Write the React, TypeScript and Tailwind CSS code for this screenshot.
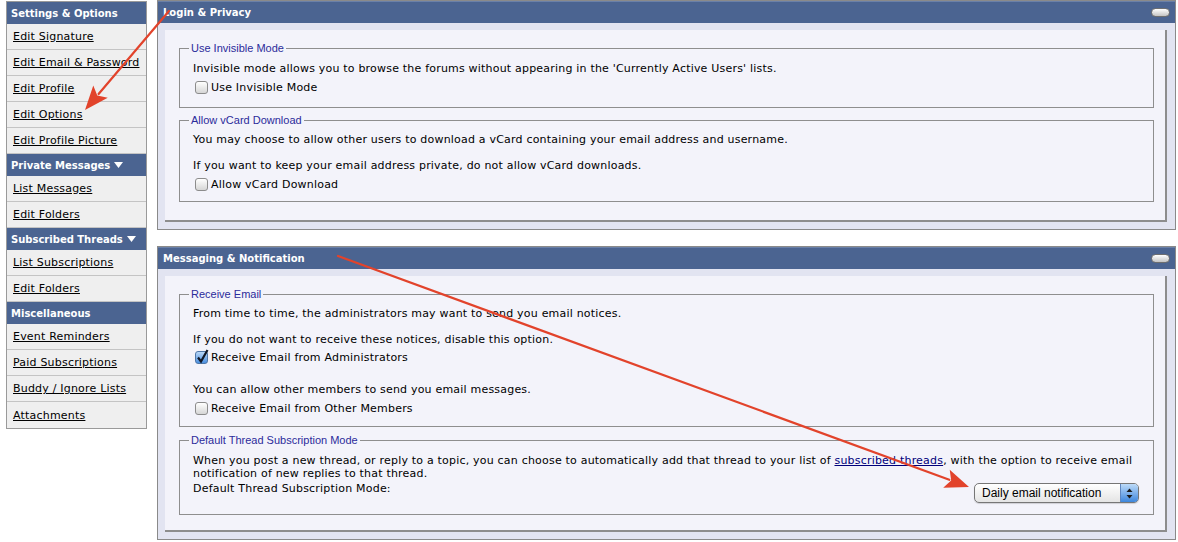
import * as React from "react";

const body = "font-['DejaVu_Sans',Verdana,sans-serif] text-[11px] leading-[13px] tracking-[0.2px] text-black";
const legendFont = "font-['Liberation_Sans',Arial,sans-serif] text-[11px] leading-[13px] text-[#2b2b9b]";
const headFont = "font-['DejaVu_Sans',Verdana,sans-serif] text-[10px] font-bold text-white";

type NavItem = { label: string; header?: boolean; caret?: boolean };

const nav: NavItem[] = [
  { label: "Settings & Options", header: true },
  { label: "Edit Signature" },
  { label: "Edit Email & Password" },
  { label: "Edit Profile" },
  { label: "Edit Options" },
  { label: "Edit Profile Picture" },
  { label: "Private Messages", header: true, caret: true },
  { label: "List Messages" },
  { label: "Edit Folders" },
  { label: "Subscribed Threads", header: true, caret: true },
  { label: "List Subscriptions" },
  { label: "Edit Folders" },
  { label: "Miscellaneous", header: true },
  { label: "Event Reminders" },
  { label: "Paid Subscriptions" },
  { label: "Buddy / Ignore Lists" },
  { label: "Attachments" },
];

function Sidebar() {
  return (
    <div className="mt-px ml-[6px] flex h-fit w-[141px] flex-col border border-[#9a9a9a] bg-[#efefef]">
      {nav.map((item, i) =>
        item.header ? (
          <div key={i} className={`flex h-[22px] items-center gap-[4px] bg-[#4b6491] pl-[4px] ${headFont}`}>
            {item.label}
            {item.caret && (
              <svg width="9" height="6" viewBox="0 0 9 6">
                <path d="M0 0 H9 L4.5 6 Z" fill="#fff" />
              </svg>
            )}
          </div>
        ) : (
          <div key={i} className="flex h-[26px] items-center border-b border-[#c4c4c4] pl-[6px] last:border-b-0">
            <a className={`${body} text-[#00007a] underline`}>{item.label}</a>
          </div>
        )
      )}
    </div>
  );
}

function Checkbox({ checked = false }: { checked?: boolean }) {
  return checked ? (
    <span className="relative inline-block h-[13px] w-[13px] shrink-0 rounded-[3px] border border-[#4f77a8] bg-linear-to-b from-[#b9d8f8] to-[#4a8fdf]">
      <svg className="absolute -top-[3px] left-[0px]" width="13" height="15" viewBox="0 0 13 15">
        <path d="M2 8.5 L5 12.5 L11.5 1" fill="none" stroke="#111827" strokeWidth="2.2" />
      </svg>
    </span>
  ) : (
    <span className="inline-block h-[13px] w-[13px] shrink-0 rounded-[3px] border border-[#8c8c8c] bg-linear-to-b from-white to-[#d6d6d6]" />
  );
}

function CheckRow({ label, checked, className = "" }: { label: string; checked?: boolean; className?: string }) {
  return (
    <div className={`flex h-[16px] items-center gap-[3px] pl-[2px] ${className}`}>
      <Checkbox checked={checked} />
      <span className={body}>{label}</span>
    </div>
  );
}

function Fieldset({ legend, className = "", children }: { legend: string; className?: string; children: React.ReactNode }) {
  return (
    <fieldset className={`border border-[#8e8e8e] pr-[12px] pl-[13px] ${className}`}>
      <legend className={`-ml-[4px] px-[2px] ${legendFont}`}>{legend}</legend>
      {children}
    </fieldset>
  );
}

function Panel({ title, className = "", innerClass = "", children }: { title: string; className?: string; innerClass?: string; children: React.ReactNode }) {
  return (
    <div className={`border border-[#8a8a8a] bg-[#e2e4f1] ${className}`}>
      <div className="flex h-[22px] items-center justify-between border-t border-[#6a80a8] bg-[#4b6491] pr-[5px] pl-[5px]">
        <span className={headFont}>{title}</span>
        <span className="h-[9px] w-[19px] rounded-full border border-[#6f6f6f] bg-linear-to-b from-white to-[#c4c4c4]" />
      </div>
      <div className="p-[7px] pr-[8px]">
        <div className={`border-r-2 border-b-2 border-[#8d8d8d] bg-[#f3f3fa] pr-[11px] pl-[14px] ${innerClass}`}>
          {children}
        </div>
      </div>
    </div>
  );
}

function Select() {
  return (
    <div className="mt-[1px] flex h-[20px] w-[165px] items-center overflow-hidden rounded-[5px] border border-[#767676] bg-linear-to-b from-white to-[#e4e4e4] shadow-[0_1px_1px_rgba(0,0,0,0.15)]">
      <span className="flex-1 pl-[7px] font-['Liberation_Sans',Arial,sans-serif] text-[12px] text-black">
        Daily email notification
      </span>
      <span className="flex h-full w-[18px] items-center justify-center border-l border-[#5f86bf] bg-linear-to-b from-[#bcdaf8] to-[#3c86dc]">
        <svg width="7" height="11" viewBox="0 0 7 11">
          <path d="M3.5 0.5 L6.5 4 H0.5 Z" fill="#1b1b1b" />
          <path d="M3.5 10.5 L6.5 7 H0.5 Z" fill="#1b1b1b" />
        </svg>
      </span>
    </div>
  );
}

function Arrow({ x1, y1, x2, y2 }: { x1: number; y1: number; x2: number; y2: number }) {
  const dx = x2 - x1;
  const dy = y2 - y1;
  const len = Math.hypot(dx, dy);
  const ux = dx / len;
  const uy = dy / len;
  const L = 24;
  const W = 19;
  const bx = x2 - ux * L;
  const by = y2 - uy * L;
  const px = -uy * (W / 2);
  const py = ux * (W / 2);
  return (
    <g>
      <line x1={x1} y1={y1} x2={bx + ux * 3} y2={by + uy * 3} stroke="#e2432b" strokeWidth="2.2" strokeLinecap="round" />
      <path d={`M${x2} ${y2} L${bx + px} ${by + py} L${bx + ux * 5} ${by + uy * 5} L${bx - px} ${by - py} Z`} fill="#e2432b" />
    </g>
  );
}

export default function App() {
  return (
    <div className="relative flex h-[542px] w-[1178px] overflow-hidden bg-white">
      <Sidebar />
      <div className="ml-[10px] w-[1019px]">
        <Panel title="Login & Privacy" innerClass="pt-[12px] pb-[18px]">
          <Fieldset legend="Use Invisible Mode" className="pt-[7px] pb-[12px]">
            <p className={body}>
              Invisible mode allows you to browse the forums without appearing in the 'Currently Active Users' lists.
            </p>
            <CheckRow label="Use Invisible Mode" className="mt-[4px]" />
          </Fieldset>
          <Fieldset legend="Allow vCard Download" className="mt-[6px] pt-[6px] pb-[9px]">
            <p className={`${body} mb-[13px]`}>
              You may choose to allow other users to download a vCard containing your email address and username.
            </p>
            <p className={body}>If you want to keep your email address private, do not allow vCard downloads.</p>
            <CheckRow label="Allow vCard Download" className="mt-[4px]" />
          </Fieldset>
        </Panel>

        <Panel title="Messaging & Notification" className="mt-[16px]" innerClass="pt-[12px] pb-[15px]">
          <Fieldset legend="Receive Email" className="pt-[6px] pb-[10px]">
            <p className={`${body} mb-[13px]`}>
              From time to time, the administrators may want to send you email notices.
            </p>
            <p className={body}>If you do not want to receive these notices, disable this option.</p>
            <CheckRow label="Receive Email from Administrators" checked className="mt-[3px]" />
            <p className={`${body} mt-[18px]`}>You can allow other members to send you email messages.</p>
            <CheckRow label="Receive Email from Other Members" className="mt-[4px]" />
          </Fieldset>
          <Fieldset legend="Default Thread Subscription Mode" className="mt-[7px] pt-[7px] pb-[11px]">
            <p className={`${body} whitespace-nowrap`}>
              When you post a new thread, or reply to a topic, you can choose to automatically add that thread to your
              list of <a className="text-[#00007a] underline">subscribed threads</a>, with the option to receive email
              <br />
              notification of new replies to that thread.
            </p>
            <div className="mt-[2px] flex items-start justify-between pr-[2px]">
              <span className={body}>Default Thread Subscription Mode:</span>
              <Select />
            </div>
          </Fieldset>
        </Panel>
      </div>

      <svg className="pointer-events-none absolute top-0 left-0" width="1178" height="542">
        <Arrow x1={169} y1={11} x2={85} y2={110} />
        <Arrow x1={338} y1={256} x2={969} y2={487} />
      </svg>
    </div>
  );
}
